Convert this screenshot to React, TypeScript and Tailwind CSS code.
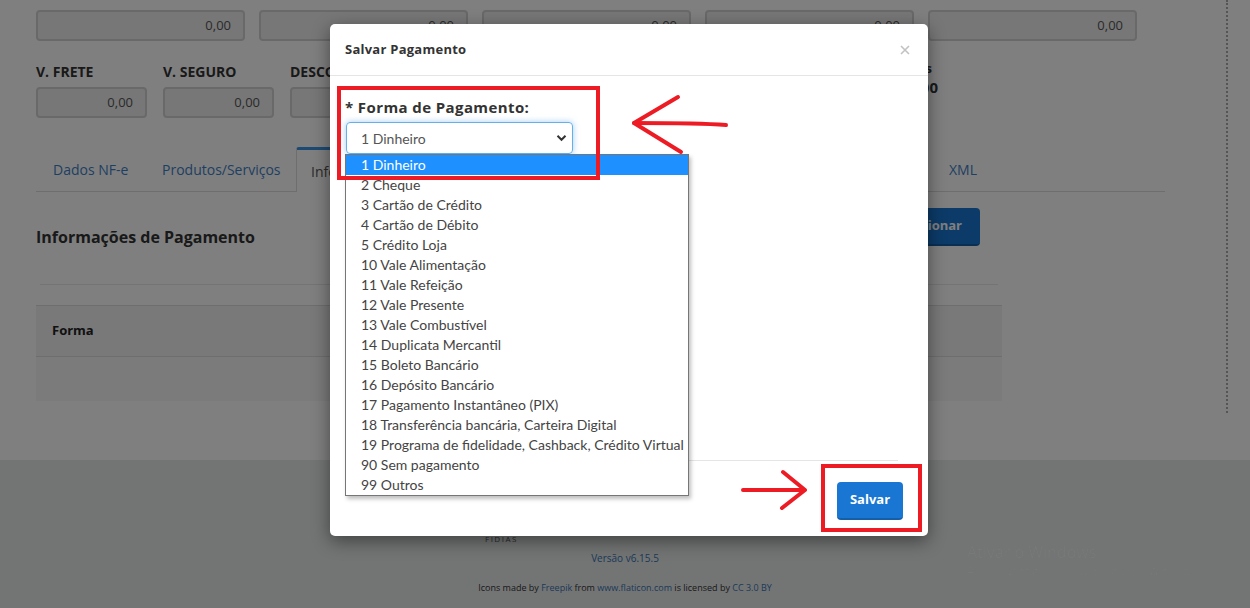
import React from "react";

const paymentOptions = [
  "1 Dinheiro",
  "2 Cheque",
  "3 Cartão de Crédito",
  "4 Cartão de Débito",
  "5 Crédito Loja",
  "10 Vale Alimentação",
  "11 Vale Refeição",
  "12 Vale Presente",
  "13 Vale Combustível",
  "14 Duplicata Mercantil",
  "15 Boleto Bancário",
  "16 Depósito Bancário",
  "17 Pagamento Instantâneo (PIX)",
  "18 Transferência bancária, Carteira Digital",
  "19 Programa de fidelidade, Cashback, Crédito Virtual",
  "90 Sem pagamento",
  "99 Outros",
];

const valueLabels = ["V. FRETE", "V. SEGURO", "DESCONTO", "V. OUTROS", "V. IPI", "V. ICMS ST"];

function ReadonlyInput({ className = "" }: { className?: string }) {
  return (
    <div
      className={`flex h-[31px] items-center justify-end rounded-[4px] border-2 border-[#d2d2d2] bg-[#eeeeee] pr-[12px] text-[13px] text-[#555] ${className}`}
    >
      0,00
    </div>
  );
}

function Tab({ label, active = false, className = "" }: { label: string; active?: boolean; className?: string }) {
  if (active) {
    return (
      <div
        className={`-mb-px flex h-[45px] items-center rounded-t-[3px] border-x border-t-[3px] border-x-[#ddd] border-t-[#3a94e6] bg-white px-[14px] text-[14px] whitespace-nowrap text-[#555] ${className}`}
      >
        {label}
      </div>
    );
  }
  return (
    <div className={`flex h-[44px] items-center pl-[17px] text-[14px] whitespace-nowrap text-[#3f7fc4] ${className}`}>
      {label}
    </div>
  );
}

function Page() {
  return (
    <div className="flex h-full flex-col">
      <div className="flex h-[460px] bg-white">
        <div className="w-[1226px] pl-[36px] pt-[10px]">
          <div className="grid w-[1101px] grid-cols-5 gap-[14px]">
            {[0, 1, 2, 3, 4].map((i) => (
              <ReadonlyInput key={i} />
            ))}
          </div>

          <div className="mt-[22px] flex gap-[16px]">
            {valueLabels.map((label) => (
              <div key={label} className="w-[111px]">
                <div className="h-[18px] text-[14px] leading-[18px] font-bold whitespace-nowrap text-[#333]">{label}</div>
                <ReadonlyInput className="mt-[6px]" />
              </div>
            ))}
            <div className="-mt-[4px] flex w-[140px] flex-col items-end">
              <div className="h-[18px] pr-[6px] text-[13px] leading-[18px] font-bold whitespace-nowrap text-[#333]">
                Total Pagamentos
              </div>
              <div className="text-[15px] leading-[20px] font-bold text-[#333]">R$ 0,00</div>
            </div>
          </div>

          <div className="mt-[29px] flex w-[1129px] border-b border-[#ddd]">
            <Tab label="Dados NF-e" className="w-[109px]" />
            <Tab label="Produtos/Serviços" className="w-[151px]" />
            <Tab label="Informações de Pagamento" active className="w-[204px]" />
            <Tab label="Totais" className="w-[90px]" />
            <Tab label="Transporte" className="w-[120px]" />
            <Tab label="Informações Adicionais" className="w-[222px]" />
            <Tab label="XML" className="pl-[15px]" />
          </div>

          <div className="mt-[16px] flex w-[944px] items-start justify-between">
            <h2 className="mt-[18px] text-[16px] leading-[22px] font-bold text-[#333]">Informações de Pagamento</h2>
            <button className="h-[38px] rounded-[4px] border-b-2 border-[#155fa8] bg-[#1976d2] px-[18px] text-[13px] font-bold text-white">
              Adicionar
            </button>
          </div>

          <div className="mt-[36px] ml-[4px] w-[958px] border-t border-[#e8e8e8]" />

          <div className="mt-[20px] w-[966px]">
            <div className="flex h-[52px] items-center border-y border-[#dcdcdc] bg-[#f2f2f2] pl-[16px] text-[13px] font-bold text-[#222]">
              Forma
            </div>
            <div className="h-[44px] bg-[#f6f6f6]" />
          </div>
        </div>
        <div className="h-[413px] border-l-2 border-dotted border-[#aaa]" />
      </div>

      <footer className="flex flex-1 flex-col items-center bg-[#e6eaea]">
        <div className="mt-[74px] w-full pl-[485px] text-[8px] leading-[10px] tracking-[1.5px] text-[#555]">FIDIAS</div>
        <div className="mt-[7px] text-[10px] leading-[14px] text-[#3a72b0]">Versão v6.15.5</div>
        <div className="mt-[16px] text-[9px] leading-[14px] text-[#333]">
          Icons made by <span className="text-[#3a72b0]">Freepik</span> from{" "}
          <span className="text-[#3a72b0]">www.flaticon.com</span> is licensed by{" "}
          <span className="text-[#3a72b0]">CC 3.0 BY</span>
        </div>
      </footer>
    </div>
  );
}

function Modal() {
  return (
    <div className="absolute top-[24px] left-[330px] flex h-[512px] w-[598px] flex-col rounded-[5px] bg-white shadow-[0_5px_18px_rgba(0,0,0,0.45)]">
      <div className="flex h-[52px] items-center justify-between border-b border-[#e5e5e5] px-[15px]">
        <span className="text-[13px] font-bold tracking-[0.25px] text-[#333]">Salvar Pagamento</span>
        <svg width="10" height="10" viewBox="0 0 10 10" className="mr-[3px]">
          <path d="M1 1L9 9M9 1L1 9" stroke="#c2c2c2" strokeWidth="1.6" />
        </svg>
      </div>

      <div className="flex-1 px-[15px] pt-[21px]">
        <div className="text-[15px] leading-[20px] font-bold tracking-[0.4px] text-[#333]">* Forma de Pagamento:</div>
        <div className="mt-[5px] ml-px flex h-[32px] w-[227px] items-center justify-between rounded-[4px] border border-[#66afe9] pr-[5px] pl-[14px] font-['Lato',sans-serif] text-[14px] text-[#555] shadow-[0_0_6px_rgba(102,175,233,0.6)]">
          <span>1 Dinheiro</span>
          <svg width="11" height="8" viewBox="0 0 11 8">
            <path d="M1.5 1.8L5.5 5.8L9.5 1.8" fill="none" stroke="#333" strokeWidth="2" />
          </svg>
        </div>
      </div>

      <div className="mx-[30px] border-t border-[#e5e5e5]" />
      <div className="flex h-[75px] items-start justify-end pt-[21px] pr-[25px]">
        <button className="h-[38px] w-[66px] rounded-[4px] border-b-2 border-[#155fa8] bg-[#1976d2] text-[13px] font-bold text-white">
          Salvar
        </button>
      </div>
    </div>
  );
}

function Dropdown() {
  return (
    <div className="absolute top-[154px] left-[345px] w-[344px] border border-[#767676] bg-white font-['Lato',sans-serif] shadow-[2px_3px_4px_rgba(0,0,0,0.25)]">
      {paymentOptions.map((opt, i) => (
        <div
          key={opt}
          className={`h-[20px] pl-[15px] text-[14px] leading-[20px] whitespace-nowrap ${
            i === 0 ? "bg-[#1e90ff] text-white" : "text-[#444]"
          }`}
        >
          {opt}
        </div>
      ))}
    </div>
  );
}

function Annotations() {
  return (
    <>
      <div className="absolute top-[86px] left-[337px] h-[94px] w-[263px] border-[4px] border-[#ed1c24]" />
      <div className="absolute top-[464px] left-[821px] h-[68px] w-[101px] border-[4px] border-[#ed1c24]" />
      <svg className="absolute top-0 left-0" width="1250" height="608" viewBox="0 0 1250 608">
        <g fill="none" stroke="#ed1c24" strokeWidth="4" strokeLinecap="round" strokeLinejoin="round">
          <path d="M726 125 Q700 123 634 123" />
          <path d="M678 97 L634 123 L681 152" />
          <path d="M743 490 L804 490" />
          <path d="M783 472 L805 490 L782 508" />
        </g>
      </svg>
    </>
  );
}

export default function App() {
  return (
    <div className="relative h-[608px] w-[1250px] overflow-hidden bg-white font-['Open_Sans',sans-serif]">
      <Page />
      <div className="absolute inset-0 bg-black/50" />
      <div className="pointer-events-none absolute top-[541px] left-[967px] font-['Open_Sans',sans-serif] whitespace-nowrap text-white/[0.03]">
        <div className="text-[16px] leading-[22px]">Ativar o Windows</div>
        <div className="text-[11px] leading-[16px]">Acesse Configurações para ativar o Windows.</div>
      </div>
      <Modal />
      <Dropdown />
      <Annotations />
    </div>
  );
}
